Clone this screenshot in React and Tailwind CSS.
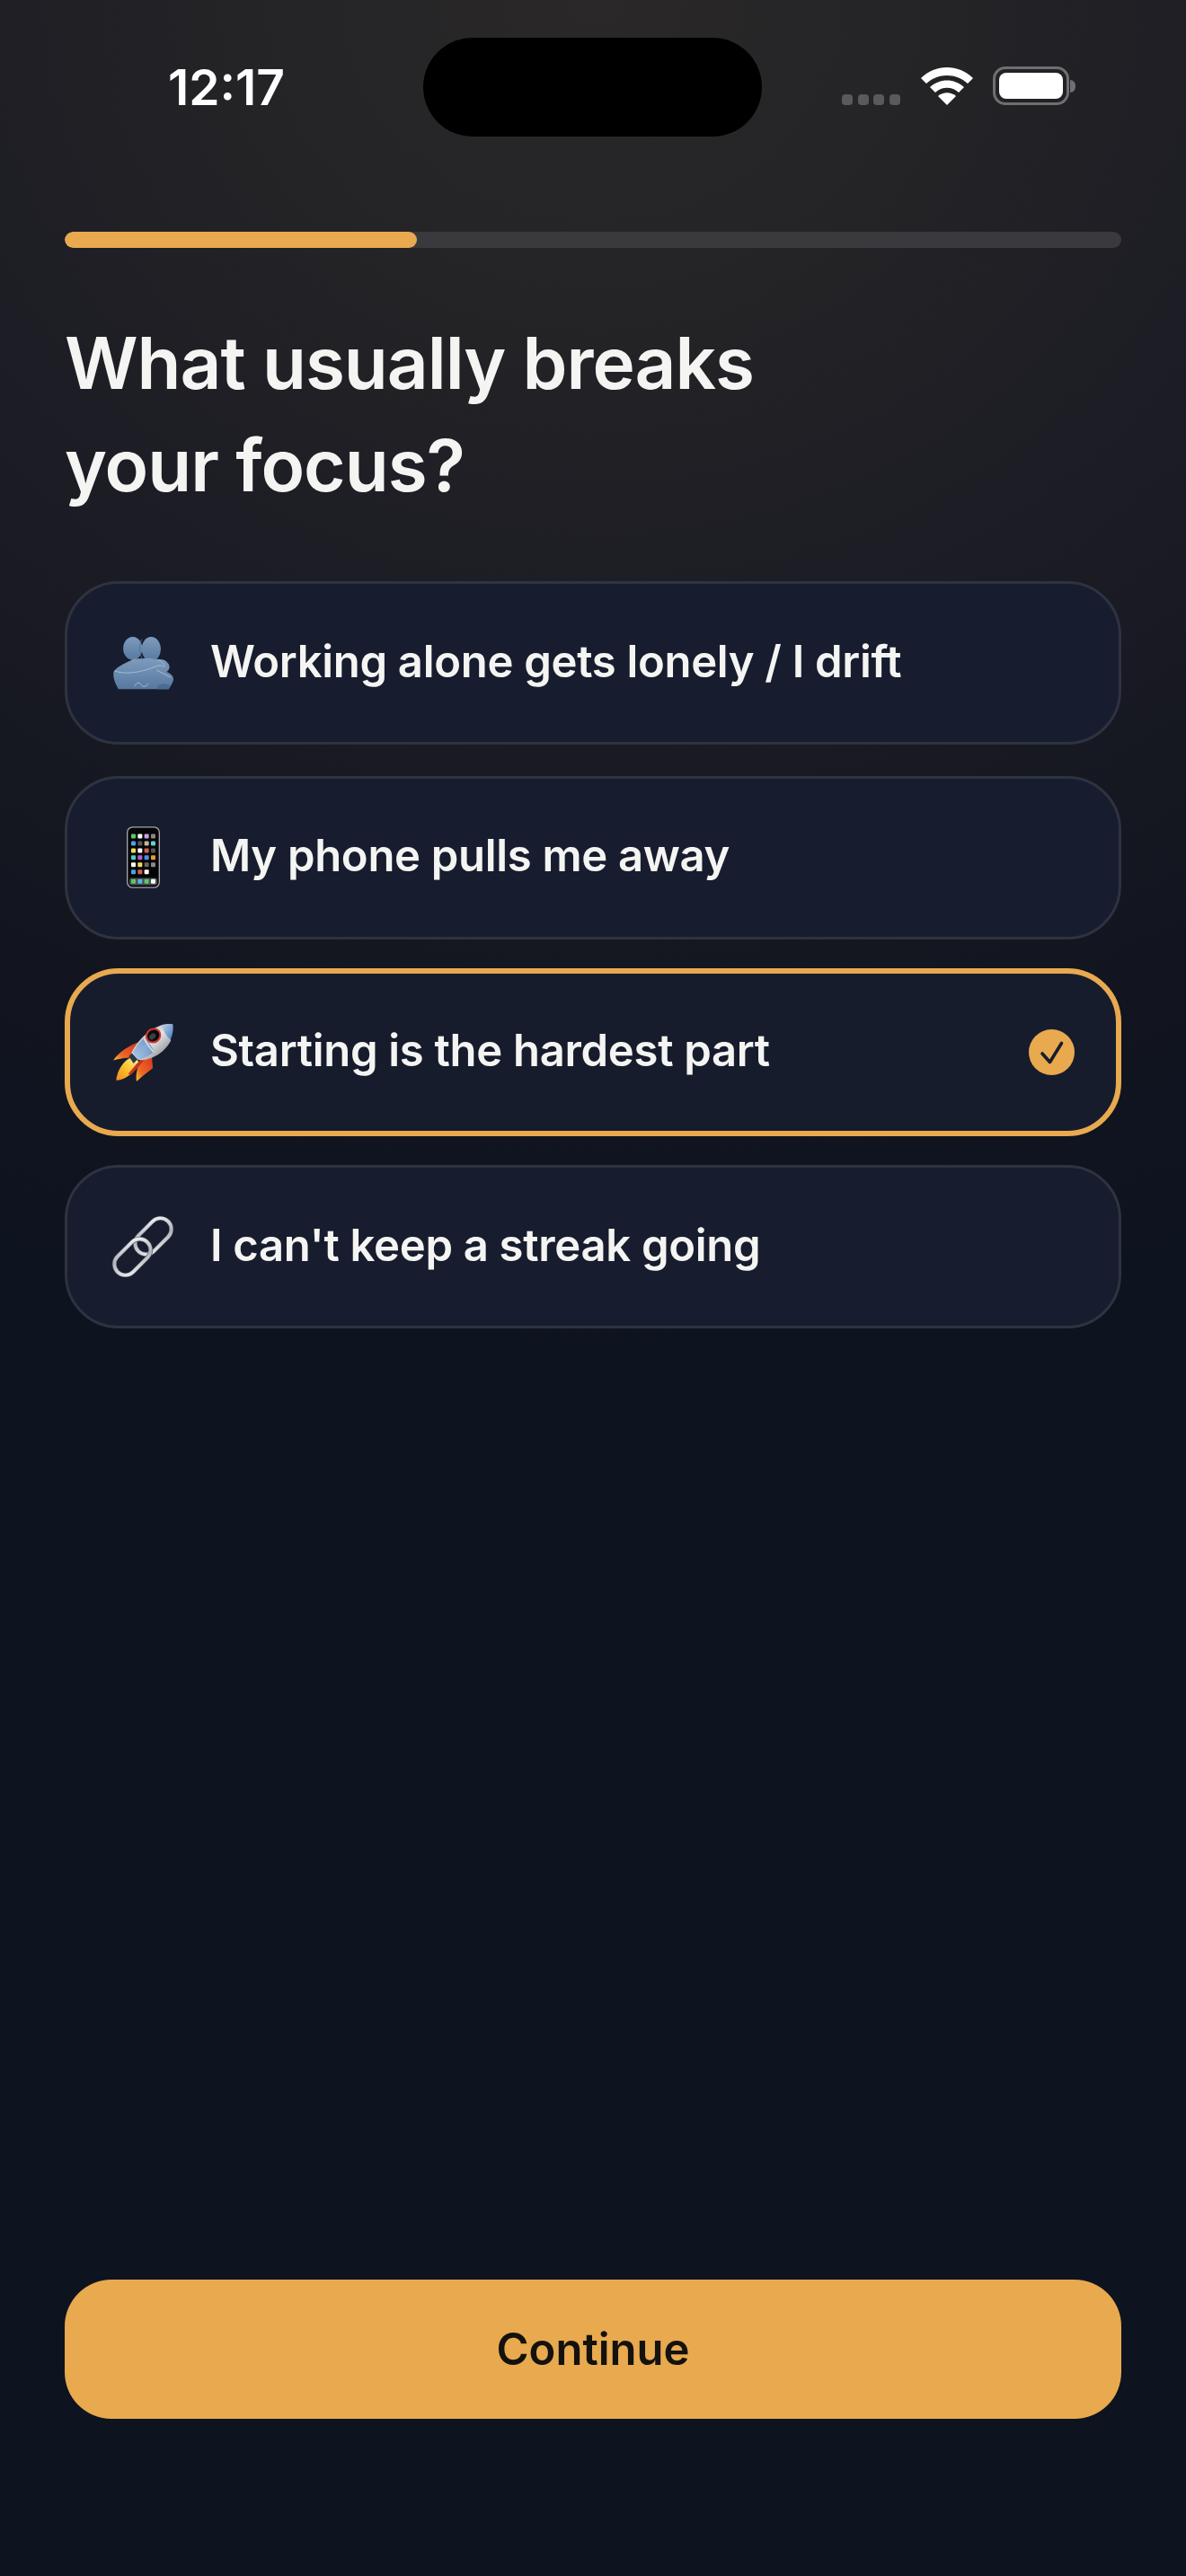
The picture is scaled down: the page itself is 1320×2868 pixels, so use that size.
import React from "react";

// emoji are drawn by hand, there is no colour emoji font in the sandbox
const HugIcon = () => (
  <svg width="69" height="60" viewBox="42 89 207 181">
    <defs>
      <linearGradient id="hug" x1="0" y1="0" x2="0" y2="1">
        <stop offset="0" stopColor="#7d9bbd" />
        <stop offset="1" stopColor="#57799e" />
      </linearGradient>
    </defs>
    <ellipse cx="110" cy="131" rx="32" ry="39" fill="url(#hug)" />
    <ellipse cx="172" cy="133" rx="32" ry="41" fill="url(#hug)" />
    <path
      d="M46 210C62 186 92 180 112 166L170 164C190 172 212 160 228 180C238 192 232 204 224 210C238 216 250 226 246 240C242 250 236 260 231 268L62 268C54 254 42 232 46 210z"
      fill="url(#hug)"
    />
    <path d="M141 100c-12 18-8 50 2 68" fill="none" stroke="#4f6f93" strokeWidth="2.5" />
    <path d="M48 206c34 14 92 6 138-14 8-4 18-6 26 0M190 204l48 24M196 172c10 0 20 8 20 22M116 258c8-14 16-14 22-6 6 10 14 10 26-4" fill="none" stroke="#a4bbd4" strokeWidth="3" />
    <path d="M196 254c10-4 24-6 38 0l-3 14h-40z" fill="#4a6c92" />
  </svg>
);

const phoneRows = [
  ["#5fc767", "#ffffff", "#c9a2e8", "#8a8a84"],
  ["#4aa3e8", "#55585a", "#c4b59a", "#62d0d8"],
  ["#f3d95e", "#ffffff", "#d0604f", "#555555"],
  ["#4ecdc4", "#b65bd0", "#4a8fe8", "#e89a2f"],
  ["#ffffff", "#f3d95e", "#666666", "#888888"],
  ["#4aa3e8", "#d0604f", "#ffffff", null],
];
const phoneDock = ["#5fc767", "#4fb8e8", "#5fc767", "#ffffff"];
const phoneX = [135, 157, 179, 201];
const phoneY = [110, 134, 158, 181, 205, 229];

const PhoneIcon = () => (
  <svg width="37" height="69" viewBox="120 85 111 206">
    <rect x="122" y="87" width="107" height="202" rx="18" fill="#050506" stroke="#a2a7ad" strokeWidth="4" />
    {phoneRows.map((row, r) =>
      row.map((c, i) =>
        c ? <rect key={r + "-" + i} x={phoneX[i]} y={phoneY[r]} width="15" height="15" rx="3" fill={c} /> : null
      )
    )}
    <rect x="129" y="257" width="93" height="24" rx="7" fill="#4b4e50" />
    {phoneDock.map((c, i) => (
      <rect key={i} x={phoneX[i]} y="261" width="15" height="15" rx="3" fill={c} />
    ))}
  </svg>
);

const RocketIcon = () => (
  <svg width="67" height="65" viewBox="44 53 201 195">
    <defs>
      <linearGradient id="body" x1="0" y1="0" x2="1" y2="1">
        <stop offset="0" stopColor="#8e99a8" />
        <stop offset="0.5" stopColor="#e2e3e4" />
        <stop offset="1" stopColor="#6e7078" />
      </linearGradient>
      <linearGradient id="nose" x1="0" y1="0" x2="1" y2="1">
        <stop offset="0" stopColor="#c7d4e2" />
        <stop offset="1" stopColor="#3f7cc4" />
      </linearGradient>
      <linearGradient id="tail" x1="1" y1="0" x2="0" y2="1">
        <stop offset="0" stopColor="#3f78bd" />
        <stop offset="1" stopColor="#9cc0e4" />
      </linearGradient>
      <linearGradient id="fin" x1="1" y1="0" x2="0" y2="1">
        <stop offset="0" stopColor="#d6301f" />
        <stop offset="0.7" stopColor="#ee6a24" />
        <stop offset="1" stopColor="#f7c23a" />
      </linearGradient>
      <linearGradient id="flame" x1="1" y1="0" x2="0" y2="1">
        <stop offset="0" stopColor="#fff3a8" />
        <stop offset="0.5" stopColor="#fbc52d" />
        <stop offset="1" stopColor="#ef8a1c" />
      </linearGradient>
    </defs>
    <path d="M128 116C100 128 64 148 44 178c14-6 40-8 68-12z" fill="url(#fin)" />
    <path d="M172 150l4 54c-18 14-36 28-54 44-4-22 2-58 24-88z" fill="url(#fin)" />
    <path d="M106 168c14 2 22 10 26 22-14 20-34 42-62 52l-15 3c-2-8 2-14 4-24 10-26 26-46 47-53z" fill="url(#flame)" />
    <path d="M94 224c14-18 36-46 58-62l4 6c-16 16-34 42-54 58z" fill="#c4331e" />
    <path d="M96 164l22-22 16 22-22 24z" fill="#2c3744" />
    <path d="M105 152C126 112 158 78 205 60l32 50c-12 26-36 48-66 60-20 8-38 8-44 6z" fill="url(#body)" />
    <path d="M110 150c14-24 26-38 42-50l30 48c-14 12-32 22-54 28-8-8-14-16-18-26z" fill="url(#tail)" opacity="0.75" />
    <path d="M150 100c8 20 18 36 32 48l-4 4c-14-14-26-30-34-48z" fill="#d9d9d9" />
    <path d="M205 60c12-4 26-5 38-3 3 16-1 36-8 52-14-12-24-30-30-49z" fill="url(#nose)" />
    <ellipse cx="178" cy="95" rx="24" ry="22" transform="rotate(-40 178 95)" fill="#0b0b0d" stroke="#d2342c" strokeWidth="6" />
    <ellipse cx="175" cy="98" rx="12" ry="9" transform="rotate(-40 175 98)" fill="#3a3d44" />
  </svg>
);

const LinkIcon = () => (
  <svg width="70" height="68" viewBox="192 216 208 206">
    <defs>
      <linearGradient id="steel" x1="0" y1="0" x2="1" y2="1">
        <stop offset="0" stopColor="#f4f6f8" />
        <stop offset="0.5" stopColor="#aeb4bb" />
        <stop offset="1" stopColor="#eef1f3" />
      </linearGradient>
    </defs>
    <rect x="-37" y="-71" width="74" height="142" rx="37" transform="translate(331 284) rotate(45)" fill="none" stroke="#4c525b" strokeWidth="15" />
    <rect x="-37" y="-71" width="74" height="142" rx="37" transform="translate(331 284) rotate(45)" fill="none" stroke="url(#steel)" strokeWidth="11" />
    <rect x="-37" y="-71" width="74" height="142" rx="37" transform="translate(261 354) rotate(45)" fill="none" stroke="#4c525b" strokeWidth="15" />
    <rect x="-37" y="-71" width="74" height="142" rx="37" transform="translate(261 354) rotate(45)" fill="none" stroke="url(#steel)" strokeWidth="11" />
  </svg>
);

const options = [
  { label: "Working alone gets lonely / I drift", icon: <HugIcon /> },
  { label: "My phone pulls me away", icon: <PhoneIcon /> },
  { label: "Starting is the hardest part", icon: <RocketIcon />, selected: true },
  { label: "I can't keep a streak going", icon: <LinkIcon /> },
];

const OptionCard = ({ label, icon, selected }) => (
  <div
    className={
      selected
        ? "flex items-center h-[187px] -my-[2.5px] pl-[46px] pr-[46px] rounded-[60px] bg-[#171c2d] border-[6px] border-[#e8a94f]"
        : "flex items-center h-[182px] pl-[49px] pr-[49px] rounded-[60px] bg-[#171d2e] border-[3px] border-[#2e3340]"
    }
  >
    <div className="w-[70px] flex justify-center shrink-0">{icon}</div>
    <span className="ml-[40px] pb-[3px] flex-1 text-[49px] font-[580] text-[#f4f4f2] tracking-[-0.3px]">{label}</span>
    {selected && (
      <div className="w-[51px] h-[51px] rounded-full bg-[#e8a94f]">
        <svg width="51" height="51" viewBox="0 0 51 51" fill="none">
          <path d="M15 27l8.5 9.5L36.5 15.5" stroke="#171c2d" strokeWidth="3.6" strokeLinecap="round" strokeLinejoin="round" />
        </svg>
      </div>
    )}
  </div>
);

export default function App() {
  return (
    <div className="relative w-[1320px] h-[2868px] overflow-hidden font-['Inter',sans-serif] bg-[#0e1320] bg-[radial-gradient(ellipse_1700px_1500px_at_50%_0px,#2a2829_0%,#252426_20%,#1d1d25_45%,#12151f_80%,#0e1320_100%)]">
      <div className="flex items-start h-[258px] pl-[72px]">
        <div className="w-[399px] pl-[115px] pt-[67px]">
          <span className="block text-[55px] leading-[60px] font-semibold text-white">12:17</span>
        </div>
        <div className="mt-[42px] w-[377px] h-[110px] rounded-[55px] bg-black" />
        <div className="ml-[89px] mt-[74px] flex items-end">
          <div className="flex gap-[5.5px]">
            <div className="w-[12px] h-[12px] rounded-[4px] bg-[#5a595b]" />
            <div className="w-[12px] h-[12px] rounded-[4px] bg-[#5a595b]" />
            <div className="w-[12px] h-[12px] rounded-[4px] bg-[#5a595b]" />
            <div className="w-[12px] h-[12px] rounded-[4px] bg-[#5a595b]" />
          </div>
          <svg className="ml-[23px]" width="58" height="42" viewBox="0 0 58 42">
            <path d="M29 42 L19 32 C25 27 33 27 39 32z" fill="#fff" />
            <path d="M10 22 L16 28 C23 21 35 21 42 28 L48 22 C37 12 21 12 10 22z" fill="#fff" />
            <path d="M0 12 L6 18 C19 6 39 6 52 18 L58 12 C42 -4 16 -4 0 12z" fill="#fff" />
          </svg>
          <div className="ml-[22px] flex items-center">
            <div className="w-[85px] h-[43px] rounded-[14px] border-[3px] border-[#6f6f72] p-[4px]">
              <div className="w-full h-full rounded-[8px] bg-white" />
            </div>
            <div className="w-[6px] h-[14px] rounded-r-full bg-[#6f6f72] ml-[1px]" />
          </div>
        </div>
      </div>

      <div className="mx-[72px] h-[18px] rounded-full bg-[#3a393d] overflow-hidden">
        <div className="w-[392px] h-full rounded-full bg-[#e8a94f]" />
      </div>

      <h1 className="mt-[71px] ml-[72px] text-[80px] leading-[114px] font-semibold text-[#f4f4f2] tracking-[-1px]">
        What usually breaks
        <br />
        your focus?
      </h1>

      <div className="mt-[72px] mx-[72px] flex flex-col gap-[34.67px]">
        {options.map((o) => (
          <OptionCard key={o.label} {...o} />
        ))}
      </div>

      <button className="absolute left-[72px] top-[2538px] w-[1176px] h-[155px] rounded-[52px] bg-[#e8a94f] text-[49px] font-semibold text-[#14120e]">
        Continue
      </button>
    </div>
  );
}
